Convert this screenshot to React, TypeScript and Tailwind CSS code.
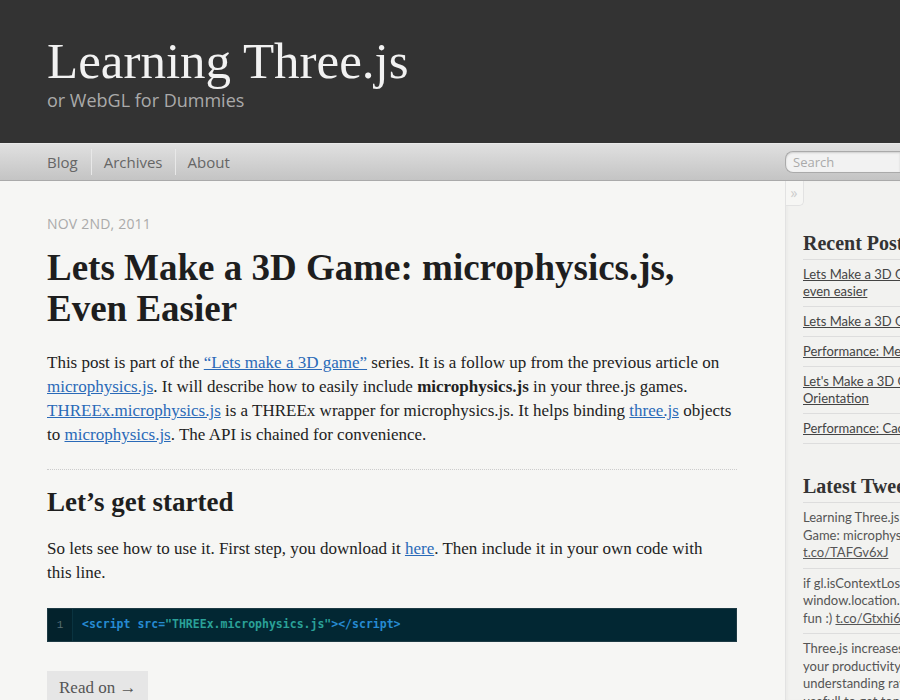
import React from "react";

const serif = { fontFamily: '"Liberation Serif", "DejaVu Serif", serif' };

export default function App() {
  return (
    <div className="w-[900px] h-[700px] overflow-hidden bg-[#f6f6f4] text-[#222]" style={serif}>
      <header className="h-[143px] bg-[#333] pl-[47px] pt-[36px]">
        <div className="text-[51px] leading-[50px] text-[#f2f2f2]" style={serif}>Learning Three.js</div>
        <div className="mt-[2px] text-[18px] leading-[24px] text-[#aaa] font-['Open_Sans',sans-serif]">or WebGL for Dummies</div>
      </header>
      <nav className="h-[38px] border-t border-t-[#e8e8e8] border-b border-b-[#aaa] bg-gradient-to-b from-[#e0e0e0] to-[#c4c4c4] flex items-center pl-[47px] font-['Open_Sans',sans-serif] text-[15px] text-[#666]">
        <span className="pr-[13px]">Blog</span>
        <span className="h-[26px] w-px bg-[#bbb] border-r border-r-[#e8e8e8]" />
        <span className="px-[12px]">Archives</span>
        <span className="h-[26px] w-px bg-[#bbb] border-r border-r-[#e8e8e8]" />
        <span className="pl-[12px]">About</span>
        <div className="ml-auto w-[115px] h-[22px] rounded-l-[8px] border border-[#aaa] border-r-0 bg-[#f2f2f2] shadow-[inset_0_1px_2px_rgba(0,0,0,0.15)] pl-[7px] text-[13px] leading-[20px] text-[#aaa]">Search</div>
      </nav>
      <div className="flex">
        <main className="w-[785px] shrink-0 pl-[47px] pr-[48px] pt-[34px]">
          <div className="text-[14px] leading-[18px] uppercase text-[#aaa] font-['Open_Sans',sans-serif] tracking-[0.2px]">Nov 2nd, 2011</div>
          <h1 className="mt-[14px] text-[37px] leading-[41px] font-bold text-[#1e1e1e]" style={serif}>
            Lets Make a 3D Game: microphysics.js,<br />Even Easier
          </h1>
          <p className="mt-[22px] text-[17px] leading-[24px] text-[#222]">
            This post is part of the <a className="text-[#2a6ab8] underline">“Lets make a 3D game”</a> series. It is a follow up from the previous article on<br />
            <a className="text-[#2a6ab8] underline">microphysics.js</a>. It will describe how to easily include <b>microphysics.js</b> in your three.js games.<br />
            <a className="text-[#2a6ab8] underline">THREEx.microphysics.js</a> is a THREEx wrapper for microphysics.js. It helps binding{" "}
            <a className="text-[#2a6ab8] underline">three.js</a> objects<br />to <a className="text-[#2a6ab8] underline">microphysics.js</a>. The API is chained for convenience.
          </p>
          <div className="mt-[22px] border-t border-dotted border-[#ccc]" />
          <h2 className="mt-[16px] text-[27px] leading-[32px] font-bold text-[#1e1e1e]" style={serif}>Let’s get started</h2>
          <p className="mt-[19px] text-[17px] leading-[24px] text-[#222]">
            So lets see how to use it. First step, you download it <a className="text-[#2a6ab8] underline">here</a>. Then include it in your own code with<br />this line.
          </p>
          <div className="mt-[23px] h-[34px] flex border border-[#1d3a44] bg-[#022733]">
            <div className="w-[25px] bg-[#03222c] border-r border-r-[#0a3340] flex items-center justify-center font-['Liberation_Mono',monospace] text-[11px] text-[#586e75]">1</div>
            <div className="pl-[9px] flex items-center font-['DejaVu_Sans_Mono',monospace] text-[11.5px] font-bold">
              <span className="text-[#268bd2]">&lt;script src=</span>
              <span className="text-[#2aa198]">"THREEx.microphysics.js"</span>
              <span className="text-[#268bd2]">&gt;&lt;/script&gt;</span>
            </div>
          </div>
          <div className="mt-[29px] inline-block bg-[#e6e6e6] px-[12px] py-[5px] text-[17px] leading-[24px] text-[#555]">Read on →</div>
        </main>
        <aside className="relative flex-1 h-[520px] bg-[#f2f2f0] border-l border-l-[#e2e2e2] shadow-[inset_2px_0_3px_rgba(0,0,0,0.03)] pl-[17px] pt-[50px] overflow-hidden">
          <div className="absolute left-[-1px] top-0 w-[19px] h-[25px] bg-[#f6f6f4] border-r border-b border-[#e2e2e2] rounded-br-[5px] flex items-start justify-center pt-[1px] text-[14px] text-[#ccc] font-['Open_Sans',sans-serif]">»</div>
          <div className="w-[260px]">
            <h3 className="text-[20px] leading-[24px] font-bold text-[#333] pb-[4px] border-b border-[#ddd] whitespace-nowrap" style={serif}>Recent Posts</h3>
            <ul className="font-['Lato',sans-serif] text-[13px] leading-[17px] text-[#444] whitespace-nowrap">
              <li className="py-[6px] border-b border-[#ddd] underline">Lets Make a 3D Game: microphysics.js,<br />even easier</li>
              <li className="py-[6px] border-b border-[#ddd] underline">Lets Make a 3D Game: Virtual Joystick</li>
              <li className="py-[6px] border-b border-[#ddd] underline">Performance: Merging Geometry</li>
              <li className="py-[6px] border-b border-[#ddd] underline">Let's Make a 3D Game: Device<br />Orientation</li>
              <li className="py-[6px] border-b border-[#ddd] underline">Performance: Caching Material</li>
            </ul>
            <h3 className="mt-[30px] text-[20px] leading-[24px] font-bold text-[#333] pb-[4px] border-b border-[#ddd] whitespace-nowrap" style={serif}>Latest Tweets</h3>
            <ul className="font-['Lato',sans-serif] text-[13px] leading-[17.5px] text-[#555] whitespace-nowrap">
              <li className="py-[6px] border-b border-[#ddd]">Learning Three.js: Lets Make a 3D<br />Game: microphysics.js, even easier<br /><span className="underline">t.co/TAFGv6xJ</span></li>
              <li className="py-[6px] border-b border-[#ddd]">if gl.isContextLost() then<br />window.location.reload() is so much<br />fun :) <span className="underline">t.co/Gtxhi6lP</span></li>
              <li className="py-[6px] border-b border-[#ddd]">Three.js increases<br />your productivity, without<br />understanding raw WebGL<br />usefull to get tons</li>
            </ul>
          </div>
        </aside>
      </div>
    </div>
  );
}
